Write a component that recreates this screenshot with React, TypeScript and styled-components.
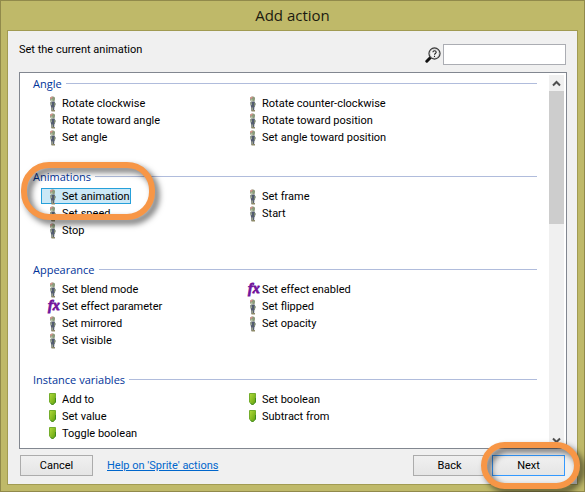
import React, { useState } from "react";
import styled, { createGlobalStyle } from "styled-components";

const GlobalStyle = createGlobalStyle`
  * { box-sizing: border-box; }
  body {
    margin: 0;
    background: #fff;
    color: #000;
    font: 11px/16px Roboto, "Noto Sans", sans-serif;
  }
  button, input { font: inherit; color: inherit; }
`;

const Dialog = styled.main`
  border: 1px solid #918a4b;
  background: #bfb969;
  padding: 0 6px 6px;
`;

const TitleBar = styled.h1`
  margin: 0;
  height: 29px;
  font-family: "Open Sans", "Noto Sans", sans-serif;
  font-size: 15px;
  line-height: 28px;
  font-weight: 400;
  text-align: center;
  color: #1c1b10;
`;

const Panel = styled.div`
  border: 1px solid #a19b52;
  background: #f0f0f0;
  padding: 13px 10px 8px 11px;
`;

const TopRow = styled.div`
  display: flex;
  justify-content: space-between;
  align-items: flex-start;
  margin-bottom: 7px;
  padding-right: 1px;
`;

const Hint = styled.p`
  margin: 0;
  line-height: 12px;
`;

const Search = styled.label`
  display: flex;
  align-items: center;
  gap: 2px;
`;

const SearchInput = styled.input`
  width: 123px;
  height: 21px;
  padding: 0 4px;
  border: 1px solid #abadb3;
  background: #fff;
  outline: none;
`;

const ListFrame = styled.div`
  display: flex;
  border: 1px solid #828790;
  background: #fff;
  padding: 1px 2px 0 0;
`;

const Sections = styled.div`
  flex: 1;
  display: flex;
  flex-direction: column;
  gap: 22px;
  padding: 0 12px 7px 13px;
`;

const Heading = styled.h2`
  display: flex;
  align-items: center;
  gap: 4px;
  margin: 0 0 2px;
  height: 19px;
  font-family: "Open Sans", "Noto Sans", sans-serif;
  font-size: 11px;
  font-weight: 400;
  color: #003399;

  &::after {
    content: "";
    flex: 1;
    height: 1px;
    background: #b0bcdc;
  }
`;

const Items = styled.ul`
  display: grid;
  grid-template-columns: 200px 1fr;
  row-gap: 1px;
  margin: 0;
  padding: 0 0 0 8px;
  list-style: none;
`;

const Cell = styled.li`
  display: flex;
`;

const ItemButton = styled.button<{ $selected: boolean }>`
  position: relative;
  display: flex;
  align-items: center;
  gap: 1px;
  height: 16px;
  padding: 2px 0 0 3px;
  border: 1px solid ${(p) => (p.$selected ? "#26a0da" : "transparent")};
  background: ${(p) => (p.$selected ? "#cbe8f6" : "none")};
  line-height: 14px;
  white-space: nowrap;
`;

const Ring = styled.span<{ $inset: string; $radius: number }>`
  position: absolute;
  inset: ${(p) => p.$inset};
  border: 6px solid #f79646;
  border-radius: ${(p) => p.$radius}px;
  filter: drop-shadow(4px 4px 3px rgba(0, 0, 0, 0.6));
  pointer-events: none;
  z-index: 1;
`;

const ScrollBar = styled.div`
  display: flex;
  flex-direction: column;
  justify-content: space-between;
  width: 15px;
  margin-top: 1px;
  background: #f0f0f0;
`;

const ScrollArrow = styled.button`
  display: flex;
  align-items: center;
  justify-content: center;
  height: 16px;
  padding: 0;
  border: 0;
  background: none;
`;

const ScrollTrack = styled.div`
  flex: 1;
`;

const ScrollThumb = styled.div`
  height: 39%;
  background: #cdcdcd;
`;

const Footer = styled.footer`
  display: flex;
  align-items: center;
  gap: 6px;
  padding: 6px 2px 0 1px;
`;

const HelpLink = styled.a`
  margin: 0 auto 0 8px;
  color: #0066cc;
`;

const PushButton = styled.button<{ $primary?: boolean }>`
  position: relative;
  width: 73px;
  height: 21px;
  padding: 0;
  border: 1px solid ${(p) => (p.$primary ? "#3399ff" : "#acacac")};
  background: linear-gradient(#f0f0f0, #e5e5e5);
  line-height: 19px;
`;

type IconKind = "sprite" | "fx" | "variable";

const SpriteIcon = () => (
  <svg width="16" height="16" viewBox="0 0 16 16" aria-hidden="true">
    <path d="M5 2.500C5 1 6.500.5 8 .5S10.300 1.500 10 3L9.500 5.500H6L5 4z" fill="#8b9a7b" />
    <path d="M5 2.500C5 1 6.500.5 8 .7L6.500 2.800z" fill="#dc8f8c" />
    <path d="M5.500 3.500h2v1.500h-2z" fill="#c0c6ae" />
    <path d="M5 6l4.500-.5 1 2.500-1 3H6z" fill="#525b70" />
    <path d="M5 6l1.500 0 .5 3-1.200.5z" fill="#a3ae95" />
    <path d="M9 6.500l1.500 1-.5 3H9z" fill="#7d8a70" />
    <path d="M6 10.500h3.500L9 15H6.500z" fill="#596073" />
    <path d="M6.500 11.500h1.500v2.500H6.500z" fill="#98a089" />
    <path d="M6.500 14h3.500v1.500H6.500z" fill="#8e8a68" />
  </svg>
);

const FxIcon = () => (
  <svg width="16" height="16" viewBox="0 0 16 16" aria-hidden="true">
    <text
      x="3"
      y="11"
      fill="#72149c"
      stroke="#72149c"
      strokeWidth="0.8"
      fontFamily="'Liberation Serif', serif"
      fontSize="14"
      fontWeight="700"
      fontStyle="italic"
    >
      fx
    </text>
  </svg>
);

const VariableIcon = () => (
  <svg width="16" height="16" viewBox="0 0 16 16" aria-hidden="true">
    <defs>
      <linearGradient id="leaf" x1="0" y1="0" x2="1" y2="1">
        <stop offset="0" stopColor="#b2dc3c" />
        <stop offset="1" stopColor="#5f9e0c" />
      </linearGradient>
    </defs>
    <path d="M4.500 1.500h6v8.500l-3 3-3-3z" fill="url(#leaf)" stroke="#74ad2c" />
    <path d="M10.500 6v4l-3 3-2-2" fill="none" stroke="#3f8a1c" />
  </svg>
);

const icons: Record<IconKind, React.FC> = {
  sprite: SpriteIcon,
  fx: FxIcon,
  variable: VariableIcon,
};

const SearchIcon = () => (
  <svg width="16" height="16" viewBox="0 0 16 16" aria-hidden="true">
    <path d="M1.800 14.200L6 10" stroke="#111" strokeWidth="3" strokeLinecap="round" />
    <circle cx="9.500" cy="6.500" r="5.500" fill="#f4f4f4" stroke="#3c3c3c" strokeWidth="1.300" />
    <circle cx="9.500" cy="6.500" r="4.400" fill="none" stroke="#c4c4c4" strokeWidth="0.700" />
    <path
      d="M7.900 5.300c0-2 3.300-2 3.300 0 0 1.200-1.700 1.100-1.700 2.400M9.500 8.700v1.200"
      fill="none"
      stroke="#222"
      strokeWidth="1.100"
    />
  </svg>
);

const Chevron = ({ down = false }: { down?: boolean }) => (
  <svg width="9" height="7" viewBox="0 0 9 7" aria-hidden="true">
    <path
      d={down ? "M1 1.500l3.500 3.500L8 1.500" : "M1 5.500L4.500 2 8 5.500"}
      fill="none"
      stroke="#505050"
      strokeWidth="2"
    />
  </svg>
);

const sections: { title: string; items: [string, IconKind][] }[] = [
  {
    title: "Angle",
    items: [
      ["Rotate clockwise", "sprite"],
      ["Rotate counter-clockwise", "sprite"],
      ["Rotate toward angle", "sprite"],
      ["Rotate toward position", "sprite"],
      ["Set angle", "sprite"],
      ["Set angle toward position", "sprite"],
    ],
  },
  {
    title: "Animations",
    items: [
      ["Set animation", "sprite"],
      ["Set frame", "sprite"],
      ["Set speed", "sprite"],
      ["Start", "sprite"],
      ["Stop", "sprite"],
    ],
  },
  {
    title: "Appearance",
    items: [
      ["Set blend mode", "sprite"],
      ["Set effect enabled", "fx"],
      ["Set effect parameter", "fx"],
      ["Set flipped", "sprite"],
      ["Set mirrored", "sprite"],
      ["Set opacity", "sprite"],
      ["Set visible", "sprite"],
    ],
  },
  {
    title: "Instance variables",
    items: [
      ["Add to", "variable"],
      ["Set boolean", "variable"],
      ["Set value", "variable"],
      ["Subtract from", "variable"],
      ["Toggle boolean", "variable"],
    ],
  },
];

export default function App() {
  const [selected, setSelected] = useState("Set animation");

  return (
    <>
      <GlobalStyle />
      <Dialog>
        <TitleBar>Add action</TitleBar>
        <Panel>
          <TopRow>
            <Hint>Set the current animation</Hint>
            <Search>
              <SearchIcon />
              <SearchInput type="text" aria-label="Search actions" />
            </Search>
          </TopRow>
          <ListFrame>
            <Sections>
              {sections.map(({ title, items }) => (
                <section key={title}>
                  <Heading>{title}</Heading>
                  <Items>
                    {items.map(([label, kind]) => {
                      const Icon = icons[kind];
                      return (
                        <Cell key={label}>
                          <ItemButton
                            type="button"
                            $selected={label === selected}
                            aria-pressed={label === selected}
                            onClick={() => setSelected(label)}
                          >
                            <Icon />
                            {label}
                            {label === selected && <Ring $inset="-27px -25px -17px -21px" $radius={28} />}
                          </ItemButton>
                        </Cell>
                      );
                    })}
                  </Items>
                </section>
              ))}
            </Sections>
            <ScrollBar>
              <ScrollArrow type="button" aria-label="Scroll up">
                <Chevron />
              </ScrollArrow>
              <ScrollTrack>
                <ScrollThumb />
              </ScrollTrack>
              <ScrollArrow type="button" aria-label="Scroll down">
                <Chevron down />
              </ScrollArrow>
            </ScrollBar>
          </ListFrame>
          <Footer>
            <PushButton type="button">Cancel</PushButton>
            <HelpLink href="#help">Help on 'Sprite' actions</HelpLink>
            <PushButton type="button">Back</PushButton>
            <PushButton type="button" $primary>
              Next
              <Ring $inset="-14px -16px -14px -12px" $radius={25} />
            </PushButton>
          </Footer>
        </Panel>
      </Dialog>
    </>
  );
}
